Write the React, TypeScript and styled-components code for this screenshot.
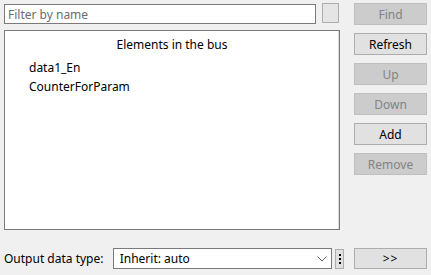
import React from 'react'
import styled, { createGlobalStyle } from 'styled-components'

const GlobalStyle = createGlobalStyle`
  html, body {
    margin: 0;
    padding: 0;
    background: #f0f0f0;
  }
  body {
    font-family: 'Noto Sans', 'Open Sans', sans-serif;
    font-size: 12px;
    color: #000;
  }
`

const Window = styled.div`
  display: flex;
  height: 275px;
  box-sizing: border-box;
  padding: 3px 4px 6px 4px;
  background: #f0f0f0;
`

const LeftColumn = styled.div`
  display: flex;
  flex-direction: column;
  width: 340px;
`

const RightColumn = styled.div`
  display: flex;
  flex-direction: column;
  gap: 8px;
  width: 73px;
  margin-left: 10px;
`

const FilterRow = styled.div`
  display: flex;
  align-items: flex-start;
  margin-top: 1px;
`

const FilterInput = styled.input`
  width: 312px;
  height: 20px;
  box-sizing: border-box;
  border: 1px solid #7a7a7a;
  background: #fff;
  padding: 0 3px;
  font: inherit;
  font-size: 12px;
  outline: none;
  &::placeholder {
    color: #6d6d6d;
  }
`

const SquareButton = styled.div`
  width: 17px;
  height: 20px;
  box-sizing: border-box;
  margin-left: 6px;
  margin-top: -1px;
  border: 1px solid #adadad;
  background: #e5e5e5;
`

const ListBox = styled.div`
  width: 336px;
  height: 200px;
  box-sizing: border-box;
  margin-top: 6px;
  border: 1px solid #7a7a7a;
  background: #fff;
  box-shadow: inset -1px 0 0 #dadada;
  padding-top: 5px;
`

const ListTitle = styled.div`
  text-align: center;
  line-height: 18px;
  margin-bottom: 4px;
`

const ListItem = styled.div`
  padding-left: 24px;
  line-height: 19px;
`

const BottomRow = styled.div`
  display: flex;
  align-items: center;
  margin-top: auto;
  height: 21px;
`

const Label = styled.span`
  width: 109px;
  white-space: nowrap;
`

const Select = styled.div`
  display: flex;
  align-items: center;
  justify-content: space-between;
  width: 220px;
  height: 21px;
  box-sizing: border-box;
  border: 1px solid #7a7a7a;
  background: #fff;
  padding: 0 4px 0 6px;
`

const DotsButton = styled.div`
  display: flex;
  flex-direction: column;
  align-items: center;
  justify-content: center;
  gap: 2px;
  width: 9px;
  height: 20px;
  box-sizing: border-box;
  margin-left: 3px;
  border: 1px solid #adadad;
  background: #e1e1e1;
`

const Dot = styled.span`
  width: 2px;
  height: 2px;
  background: #000;
`

const Button = styled.div<{ $disabled?: boolean }>`
  display: flex;
  align-items: center;
  justify-content: center;
  height: 22px;
  box-sizing: border-box;
  border: 1px solid ${p => (p.$disabled ? '#bfbfbf' : '#adadad')};
  background: ${p => (p.$disabled ? '#cccccc' : '#e1e1e1')};
  color: ${p => (p.$disabled ? '#838383' : '#000')};
`

const BottomButton = styled(Button)`
  margin-top: auto;
  height: 21px;
  letter-spacing: 1px;
`

const Chevron = () => (
  <svg width='10' height='6' viewBox='0 0 10 6'>
    <path d='M0.5 0.5 L5 5 L9.5 0.5' fill='none' stroke='#606060' strokeWidth='1' />
  </svg>
)

const App = () => {
  const items = ['data1_En', 'CounterForParam']

  return (
    <Window>
      <GlobalStyle />
      <LeftColumn>
        <FilterRow>
          <FilterInput placeholder='Filter by name' />
          <SquareButton />
        </FilterRow>
        <ListBox>
          <ListTitle>Elements in the bus</ListTitle>
          {items.map(item => (
            <ListItem key={item}>{item}</ListItem>
          ))}
        </ListBox>
        <BottomRow>
          <Label>Output data type:</Label>
          <Select>
            <span>Inherit: auto</span>
            <Chevron />
          </Select>
          <DotsButton>
            <Dot />
            <Dot />
            <Dot />
          </DotsButton>
        </BottomRow>
      </LeftColumn>
      <RightColumn>
        <Button $disabled>Find</Button>
        <Button>Refresh</Button>
        <Button $disabled>Up</Button>
        <Button $disabled>Down</Button>
        <Button>Add</Button>
        <Button $disabled>Remove</Button>
        <BottomButton>&gt;&gt;</BottomButton>
      </RightColumn>
    </Window>
  )
}

export default App
